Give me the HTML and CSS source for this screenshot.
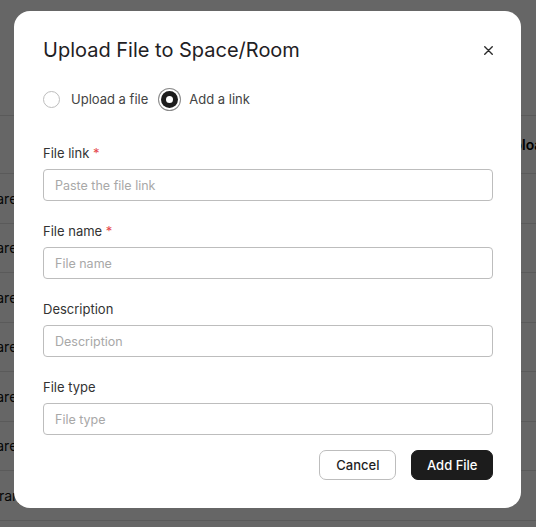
FILE: index.html
```html
<!DOCTYPE html>
<html lang="en">
<head>
    <meta charset="UTF-8">
    <meta name="viewport" content="width=device-width, initial-scale=1.0">
    <title>Upload File to Space/Room</title>
    <link rel="stylesheet" href="styles.css">
</head>
<body>
    <div class="page">
        <div class="files-table">
            <div class="row head">
                <span class="cell name"></span>
                <span class="cell uploaded">Upload date</span>
            </div>
            <div class="row"><span class="cell name">Shared</span></div>
            <div class="row"><span class="cell name">Shared</span></div>
            <div class="row"><span class="cell name">Shared</span></div>
            <div class="row"><span class="cell name">Shared</span></div>
            <div class="row"><span class="cell name">Shared</span></div>
            <div class="row"><span class="cell name">Shared</span></div>
            <div class="row"><span class="cell name">Library</span></div>
            <div class="row"><span class="cell name">Shared</span></div>
        </div>
    </div>

    <div class="overlay">
        <div class="modal">
            <div class="modal-header">
                <h2 class="modal-title">Upload File to Space/Room</h2>
                <button class="close-btn" aria-label="Close">
                    <svg width="9" height="9" viewBox="0 0 9 9">
                        <path d="M0.75 0.75 L8.25 8.25 M8.25 0.75 L0.75 8.25" stroke="#2a2a2a" stroke-width="1.4" stroke-linecap="round"/>
                    </svg>
                </button>
            </div>

            <div class="radio-group">
                <label class="radio">
                    <span class="radio-dot"></span>
                    <span>Upload a file</span>
                </label>
                <label class="radio checked">
                    <span class="radio-dot"></span>
                    <span>Add a link</span>
                </label>
            </div>

            <div class="fields">
                <div class="field">
                    <label class="field-label">File link <span class="req">*</span></label>
                    <input class="field-input" type="text" placeholder="Paste the file link">
                </div>
                <div class="field">
                    <label class="field-label">File name <span class="req">*</span></label>
                    <input class="field-input" type="text" placeholder="File name">
                </div>
                <div class="field">
                    <label class="field-label">Description</label>
                    <input class="field-input" type="text" placeholder="Description">
                </div>
                <div class="field">
                    <label class="field-label">File type</label>
                    <input class="field-input" type="text" placeholder="File type">
                </div>
            </div>

            <div class="actions">
                <button class="btn btn-cancel">Cancel</button>
                <button class="btn btn-primary">Add File</button>
            </div>
        </div>
    </div>
</body>
</html>
```

FILE: styles.css
```css
* {
    box-sizing: border-box;
}

body {
    margin: 0;
    padding: 0;
    height: 100vh;
    overflow: hidden;
    background: #ffffff;
    font-family: Inter, "Noto Sans", sans-serif;
    color: #1f1f1f;
}

/* page behind the dialog */
.page {
    padding-top: 115px;
}

.files-table {
    margin-left: -33px;
    width: 760px;
    border-top: 1px solid #e0e0e0;
}

.row {
    display: grid;
    grid-template-columns: 524px 220px;
    align-items: center;
    height: 49.5px;
    border-bottom: 1px solid #e0e0e0;
    font-size: 14px;
    color: #111;
}

.row.head {
    height: 58px;
    font-weight: 600;
    color: #000;
}

.cell {
    padding-left: 12px;
    white-space: nowrap;
}

/* dialog */
.overlay {
    position: fixed;
    inset: 0;
    background: rgba(0, 0, 0, 0.6);
    display: flex;
    justify-content: flex-start;
    align-items: flex-start;
    padding: 11px 0 0 14px;
}

.modal {
    width: 507px;
    background: #fff;
    border-radius: 16px;
    padding: 25px 28px 28px 29px;
    display: flex;
    flex-direction: column;
}

.modal-header {
    display: flex;
    justify-content: space-between;
    align-items: center;
    height: 28px;
}

.modal-title {
    margin: 0;
    font-size: 20px;
    line-height: 28px;
    font-weight: 400;
    color: #1f2124;
}

.close-btn {
    border: none;
    background: none;
    padding: 0;
    width: 10px;
    height: 10px;
    display: flex;
    align-items: center;
    justify-content: center;
    cursor: pointer;
}

.radio-group {
    display: flex;
    align-items: center;
    gap: 13px;
    margin-top: 25px;
    height: 20px;
}

.radio {
    display: flex;
    align-items: center;
    gap: 11px;
    font-size: 13px;
    color: #444;
    cursor: pointer;
}

.radio-dot {
    width: 17px;
    height: 17px;
    border-radius: 50%;
    border: 1px solid #bdbdbd;
    background: #fff;
    display: flex;
    align-items: center;
    justify-content: center;
}

.radio.checked .radio-dot {
    border: none;
    background: #1c1c1c;
    box-shadow: 0 0 0 2px #fff, 0 0 0 3px #8a8a8a;
}

.radio.checked .radio-dot::after {
    content: '';
    width: 7px;
    height: 7px;
    border-radius: 50%;
    background: #fff;
}

.fields {
    display: flex;
    flex-direction: column;
    gap: 20px;
    margin-top: 34px;
}

.field {
    display: flex;
    flex-direction: column;
    gap: 6px;
}

.field-label {
    font-size: 13px;
    line-height: 20px;
    color: #333;
}

.req {
    color: #e5484d;
}

.field-input {
    height: 32px;
    width: 100%;
    border: 1px solid #bdbdbd;
    border-radius: 4px;
    padding: 0 11px;
    font-family: inherit;
    font-size: 12.5px;
    color: #222;
    background: #fff;
    outline: none;
}

.field-input::placeholder {
    color: #a8a8a8;
}

.actions {
    display: flex;
    justify-content: flex-end;
    gap: 15px;
    margin-top: 15px;
}

.btn {
    height: 30px;
    padding: 0 16px;
    border-radius: 7px;
    font-family: inherit;
    font-size: 13px;
    font-weight: 500;
    cursor: pointer;
}

.btn-cancel {
    background: #fff;
    border: 1px solid #bdbdbd;
    color: #1f1f1f;
}

.btn-primary {
    padding: 0 14.5px;
    background: #1c1c1c;
    border: 1px solid #1c1c1c;
    color: #fff;
}
```
